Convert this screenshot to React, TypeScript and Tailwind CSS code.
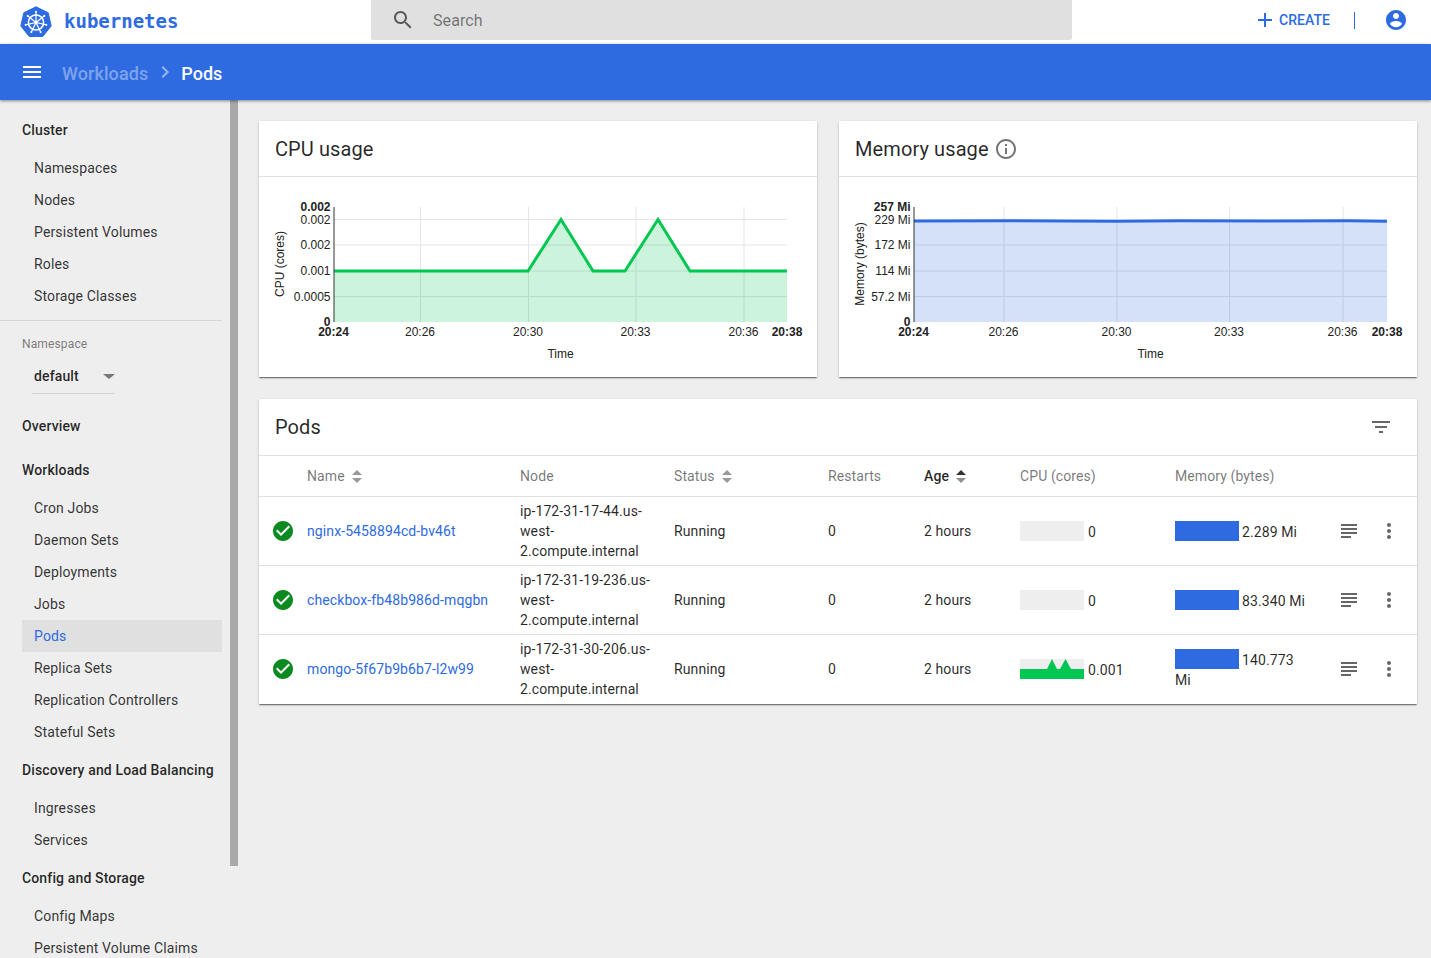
import { ReactNode } from 'react';

const BLUE = '#2e6be1';

const paths = {
  menu: 'M3 18h18v-2H3v2zm0-5h18v-2H3v2zm0-7v2h18V6H3z',
  search:
    'M15.5 14h-.79l-.28-.27C15.41 12.59 16 11.11 16 9.5 16 5.91 13.09 3 9.5 3S3 5.91 3 9.5 5.91 16 9.5 16c1.61 0 3.09-.59 4.23-1.57l.27.28v.79l5 4.99L20.49 19l-4.99-5zm-6 0C7.01 14 5 11.99 5 9.5S7.01 5 9.5 5 14 7.01 14 9.5 11.99 14 9.5 14z',
  add: 'M19 13h-6v6h-2v-6H5v-2h6V5h2v6h6v2z',
  account:
    'M12 2C6.48 2 2 6.48 2 12s4.48 10 10 10 10-4.48 10-10S17.52 2 12 2zm0 3c1.66 0 3 1.34 3 3s-1.34 3-3 3-3-1.34-3-3 1.34-3 3-3zm0 14.2c-2.5 0-4.71-1.28-6-3.22.03-1.99 4-3.08 6-3.08 1.99 0 5.97 1.09 6 3.08-1.29 1.94-3.5 3.22-6 3.22z',
  chevron: 'M10 6L8.59 7.41 13.17 12l-4.58 4.59L10 18l6-6z',
  filter: 'M10 18h4v-2h-4v2zM3 6v2h18V6H3zm3 7h12v-2H6v2z',
  subject: 'M14 17H4v2h10v-2zm6-8H4v2h16V9zM4 15h16v-2H4v2zM4 5v2h16V5H4z',
  more: 'M12 8c1.1 0 2-.9 2-2s-.9-2-2-2-2 .9-2 2 .9 2 2 2zm0 2c-1.1 0-2 .9-2 2s.9 2 2 2 2-.9 2-2-.9-2-2-2zm0 6c-1.1 0-2 .9-2 2s.9 2 2 2 2-.9 2-2-.9-2-2-2z',
  check:
    'M12 2C6.48 2 2 6.48 2 12s4.48 10 10 10 10-4.48 10-10S17.52 2 12 2zm-2 15l-5-5 1.41-1.41L10 14.17l7.59-7.59L19 8l-9 9z',
  info: 'M11 17h2v-6h-2v6zm1-15C6.48 2 2 6.48 2 12s4.48 10 10 10 10-4.48 10-10S17.52 2 12 2zm0 18c-4.41 0-8-3.59-8-8s3.59-8 8-8 8 3.59 8 8-3.59 8-8 8zM11 9h2V7h-2v2z',
};

function Icon({ d, className }: { d: string; className?: string }) {
  return (
    <svg viewBox="0 0 24 24" fill="currentColor" className={className}>
      <path d={d} />
    </svg>
  );
}

function Logo() {
  const spokes = [0, 1, 2, 3, 4, 5, 6].map((i) => (i * 360) / 7);
  return (
    <svg viewBox="0 0 32 32" className="w-[32px] h-[32px]">
      <path d="M16 0.8 L28.2 6.7 L31.2 19.9 L22.8 30.5 L9.2 30.5 L0.8 19.9 L3.8 6.7 Z" fill={BLUE} strokeLinejoin="round" stroke={BLUE} />
      <circle cx="16" cy="16.5" r="7.6" fill="none" stroke="#fff" strokeWidth="1.5" />
      <circle cx="16" cy="16.5" r="1.7" fill="#fff" />
      {spokes.map((a) => (
        <g key={a} transform={`rotate(${a} 16 16.5)`}>
          <line x1="16" y1="16.5" x2="16" y2="5.6" stroke="#fff" strokeWidth="1.2" />
          <circle cx="16" cy="5.8" r="1" fill="#fff" />
        </g>
      ))}
    </svg>
  );
}

function SortArrows({ dark }: { dark?: boolean }) {
  return (
    <svg viewBox="0 0 10 14" className={dark ? 'w-[10px] h-[14px] text-black/80' : 'w-[10px] h-[14px] text-black/40'} fill="currentColor">
      <path d="M0 6 L5 1 L10 6 Z" />
      <path d="M0 9 L5 14 L10 9 Z" opacity={dark ? 0.55 : 1} />
    </svg>
  );
}

function SectionTitle({ children }: { children: ReactNode }) {
  return <div className="h-11 pl-[22px] flex items-center text-[14px] font-medium text-black/85">{children}</div>;
}

function NavItem({ label }: { label: string }) {
  const active = label === 'Pods';
  return (
    <div className={active ? 'h-8 ml-[22px] mr-2 pl-3 flex items-center text-[14px] bg-[#e0e0e0] text-[#2e6be1]' : 'h-8 ml-[22px] mr-2 pl-3 flex items-center text-[14px] text-black/80'}>
      {label}
    </div>
  );
}

function Sidebar() {
  return (
    <aside className="relative w-[238px] shrink-0 overflow-hidden h-[858px] pt-2 tracking-[0.14px]">
      <div className="w-[230px]">
        <SectionTitle>Cluster</SectionTitle>
        {['Namespaces', 'Nodes', 'Persistent Volumes', 'Roles', 'Storage Classes'].map((l) => (
          <NavItem key={l} label={l} />
        ))}
        <div className="mt-2 mr-2 border-t border-[#d6d6d6]" />
        <div className="pl-[22px] mt-[16px] text-[12px] leading-[14px] text-black/50">Namespace</div>
        <div className="ml-8 mt-[16px] h-[27px] w-[83px] pl-[2px] flex items-start justify-between border-b border-[#d6d6d6] text-[14px] font-medium text-black/85">
          <span className="leading-[18px]">default</span>
          <span className="mt-[7px] border-x-[6px] border-x-transparent border-t-[5px] border-t-black/50" />
        </div>
        <div className="h-[10px]" />
        <SectionTitle>Overview</SectionTitle>
        <SectionTitle>Workloads</SectionTitle>
        {['Cron Jobs', 'Daemon Sets', 'Deployments', 'Jobs', 'Pods', 'Replica Sets', 'Replication Controllers', 'Stateful Sets'].map((l) => (
          <NavItem key={l} label={l} />
        ))}
        <SectionTitle>Discovery and Load Balancing</SectionTitle>
        {['Ingresses', 'Services'].map((l) => (
          <NavItem key={l} label={l} />
        ))}
        <SectionTitle>Config and Storage</SectionTitle>
        {['Config Maps', 'Persistent Volume Claims'].map((l) => (
          <NavItem key={l} label={l} />
        ))}
      </div>
      <div className="absolute left-[230px] top-0 w-2 h-[766px] bg-[#a9a9a9]" />
    </aside>
  );
}

type ChartProps = {
  yLabel: string;
  axisX: number;
  right: number;
  hLines: number[];
  vLines: { x: number; label: string }[];
  yTicks: { y: number; label: string; bold?: boolean }[];
  points: [number, number][];
  stroke: string;
  fill: string;
  yLabelX: number;
  timeX: number;
  width: number;
};

function Chart(p: ChartProps) {
  const top = 30;
  const bottom = 145;
  const line = p.points.map((q) => q.join(',')).join(' ');
  const area = `${p.axisX},${bottom} ${line} ${p.right},${bottom}`;
  const font = { fontFamily: '"Liberation Sans", Arial, sans-serif', fontSize: 12 };
  return (
    <svg viewBox={`0 0 ${p.width} 200`} className="block w-full h-[200px]" style={font}>
      {p.hLines.map((y) => (
        <line key={y} x1={p.axisX} x2={p.right} y1={y} y2={y} stroke="#e4e4e4" />
      ))}
      {p.vLines.map((v) => (
        <line key={v.x} x1={v.x} x2={v.x} y1={top} y2={bottom} stroke="#e4e4e4" />
      ))}
      <polygon points={area} fill={p.fill} fillOpacity="0.2" />
      <polyline points={line} fill="none" stroke={p.stroke} strokeWidth="3" strokeLinejoin="miter" />
      <line x1={p.axisX} x2={p.axisX} y1={top} y2={bottom} stroke="#333" />
      {p.yTicks.map((t) => (
        <text key={t.label + t.y} x={p.axisX - 3.5} y={t.y + 4} textAnchor="end" fontWeight={t.bold ? 700 : 400} fill="#222">
          {t.label}
        </text>
      ))}
      <text x={p.axisX - 0.5} y={159} textAnchor="middle" fontWeight={700} fill="#222">20:24</text>
      {p.vLines.map((v) => (
        <text key={v.label} x={v.x - 0.5} y={159} textAnchor="middle" fill="#222">{v.label}</text>
      ))}
      <text x={p.right} y={159} textAnchor="middle" fontWeight={700} fill="#222">20:38</text>
      <text x={p.timeX - 0.5} y={181} textAnchor="middle" fill="#222">Time</text>
      <text transform={`translate(${p.yLabelX} 87) rotate(-90)`} textAnchor="middle" fill="#222" fontSize={12}>
        {p.yLabel}
      </text>
    </svg>
  );
}

const CARD = 'bg-white shadow-[0_2px_1px_-1px_rgba(0,0,0,0.3),0_1px_1px_0_rgba(0,0,0,0.2),0_1px_3px_0_rgba(0,0,0,0.15)]';

function ChartCard({ title, info, children }: { title: string; info?: boolean; children: ReactNode }) {
  return (
    <section className={CARD}>
      <div className="h-[56px] px-4 flex items-center gap-[5px] border-b border-[#e0e0e0] text-[20px] tracking-[0.1px] text-black/85">
        {title}
        {info && <Icon d={paths.info} className="w-6 h-6 text-black/55" />}
      </div>
      {children}
    </section>
  );
}

const rows = [
  { name: 'nginx-5458894cd-bv46t', node: 'ip-172-31-17-44.', cpu: '0', mem: '2.289 Mi', spark: false },
  { name: 'checkbox-fb48b986d-mqgbn', node: 'ip-172-31-19-236.', cpu: '0', mem: '83.340 Mi', spark: false },
  { name: 'mongo-5f67b9b6b7-l2w99', node: 'ip-172-31-30-206.', cpu: '0.001', mem: '140.773 Mi', spark: true },
];

const GRID = 'grid grid-cols-[48px_213px_154px_154px_96px_96px_155px_150px_40px_1fr] items-center';

function CpuSpark({ on }: { on: boolean }) {
  return (
    <svg viewBox="0 0 64 20" className="w-16 h-5 shrink-0">
      <rect width="64" height="20" fill="#eeeeee" />
      {on && <polygon points="0,20 0,10 27,10 32,0 37,10 40,10 45.5,0 51,10 64,10 64,20" fill="#00c752" />}
    </svg>
  );
}

function PodsCard() {
  const hd = 'text-[14px] text-black/55 flex items-center gap-[7px]';
  return (
    <section className={CARD}>
      <div className="h-[57px] pl-4 pr-[24px] flex items-center justify-between border-b border-[#e0e0e0] text-[20px] tracking-[0.1px] text-black/85">
        Pods
        <Icon d={paths.filter} className="w-6 h-6 text-black/60" />
      </div>
      <div className="tracking-[0.1px]">
        <div className={`${GRID} h-[41px] border-b border-[#e0e0e0]`}>
          <div />
          <div className={hd}>Name <SortArrows /></div>
          <div className={hd}>Node</div>
          <div className={hd}>Status <SortArrows /></div>
          <div className={hd}>Restarts</div>
          <div className={`${hd} font-medium text-black/85`}>Age <SortArrows dark /></div>
          <div className={hd}>CPU (cores)</div>
          <div className={hd}>Memory (bytes)</div>
        </div>
        {rows.map((r, i) => (
          <div key={r.name} className={`${GRID} h-[69px] border-b text-[14px] leading-[20px] text-black/85 ${i < 2 ? 'border-[#e0e0e0]' : 'border-transparent'}`}>
            <div className="pl-[12px]">
              <Icon d={paths.check} className="w-6 h-6 text-[#0a8a1f]" />
            </div>
            <div className="text-[#2e6be1] whitespace-nowrap">{r.name}</div>
            <div>
              {r.node}us-<br />west-<br />2.compute.internal
            </div>
            <div>Running</div>
            <div>0</div>
            <div>2 hours</div>
            <div className="flex items-center gap-1">
              <CpuSpark on={r.spark} />
              <span className="mt-[2px]">{r.cpu}</span>
            </div>
            <div className="w-[133px]">
              <span className="inline-block w-16 h-5 mr-[3px] align-[-4px] bg-[#2e6be1]" />
              {r.mem}
            </div>
            <div className="pl-3">
              <Icon d={paths.subject} className="w-6 h-6 text-black/60" />
            </div>
            <div className="pl-3">
              <Icon d={paths.more} className="w-6 h-6 text-black/60" />
            </div>
          </div>
        ))}
      </div>
    </section>
  );
}

export default function App() {
  return (
    <div className="w-[1431px] h-[958px] overflow-hidden bg-[#eeeeee] font-['Roboto',sans-serif]">
      <header className="h-[44px] bg-white flex items-start relative">
        <div className="w-[371px] h-[44px] pl-[20px] flex items-center gap-[12px] text-[#2e6be1]">
          <Logo />
          <span className="font-['DejaVu_Sans_Mono',monospace] font-bold text-[19px] -mt-[1px]">kubernetes</span>
        </div>
        <div className="w-[701px] h-[40px] bg-[#e0e0e0] rounded-b-[2px] pl-5 flex items-center gap-[18px] text-[16px] tracking-[0.1px] text-black/50">
          <Icon d={paths.search} className="w-6 h-6 text-black/60" />
          <span className="mt-[1px]">Search</span>
        </div>
        <div className="flex-1 h-[40px] flex items-center justify-end pr-[23px] text-[#2e6be1]">
          <Icon d={paths.add} className="w-6 h-6 mr-[2px] -mt-[1px]" />
          <span className="text-[14px] font-medium tracking-[0.05px]">CREATE</span>
          <span className="ml-6 mr-[29px] w-px h-[17px] bg-[#2e6be1]" />
          <Icon d={paths.account} className="w-6 h-6" />
        </div>
      </header>
      <nav className="relative z-10 h-[56px] bg-[#2e6be1] flex items-center pl-5 shadow-[0_1px_3px_rgba(0,0,0,0.45)]">
        <Icon d={paths.menu} className="w-6 h-6 text-white" />
        <span className="ml-[18px] mt-[2px] text-[18px] font-medium tracking-[0.1px] text-white/40">Workloads</span>
        <Icon d={paths.chevron} className="w-6 h-6 ml-[5px] mr-[4px] text-white/50" />
        <span className="mt-[2px] text-[18px] font-medium text-white">Pods</span>
      </nav>
      <div className="flex">
        <Sidebar />
        <main className="flex-1 pt-[21px] pl-[21px] pr-[14px]">
          <div className="grid grid-cols-[558px_578px] gap-[22px]">
            <ChartCard title="CPU usage">
              <Chart
                width={558}
                yLabel="CPU (cores)"
                yLabelX={25}
                axisX={75}
                right={528}
                timeX={302}
                hLines={[42.5, 68, 94, 119.5]}
                vLines={[
                  { x: 161.5, label: '20:26' },
                  { x: 269.5, label: '20:30' },
                  { x: 377, label: '20:33' },
                  { x: 485, label: '20:36' },
                ]}
                yTicks={[
                  { y: 30, label: '0.002', bold: true },
                  { y: 42.5, label: '0.002' },
                  { y: 68, label: '0.002' },
                  { y: 94, label: '0.001' },
                  { y: 119.5, label: '0.0005' },
                  { y: 145, label: '0', bold: true },
                ]}
                points={[[75, 94], [269, 94], [302, 42.5], [334, 94], [366, 94], [399, 42.5], [431, 94], [528, 94]]}
                stroke="#00c752"
                fill="#00c752"
              />
            </ChartCard>
            <ChartCard title="Memory usage" info>
              <Chart
                width={578}
                yLabel="Memory (bytes)"
                yLabelX={25}
                axisX={75}
                right={548}
                timeX={312}
                hLines={[43, 68, 94, 119.5]}
                vLines={[
                  { x: 165, label: '20:26' },
                  { x: 278, label: '20:30' },
                  { x: 390.5, label: '20:33' },
                  { x: 504, label: '20:36' },
                ]}
                yTicks={[
                  { y: 30, label: '257 Mi', bold: true },
                  { y: 43, label: '229 Mi' },
                  { y: 68, label: '172 Mi' },
                  { y: 94, label: '114 Mi' },
                  { y: 119.5, label: '57.2 Mi' },
                  { y: 145, label: '0', bold: true },
                ]}
                points={[[75, 44], [165, 43.8], [278, 44.3], [340, 43.8], [430, 44], [510, 43.8], [548, 44.2]]}
                stroke="#2e6be1"
                fill="#2e6be1"
              />
            </ChartCard>
          </div>
          <div className="mt-[22px]">
            <PodsCard />
          </div>
        </main>
      </div>
    </div>
  );
}
